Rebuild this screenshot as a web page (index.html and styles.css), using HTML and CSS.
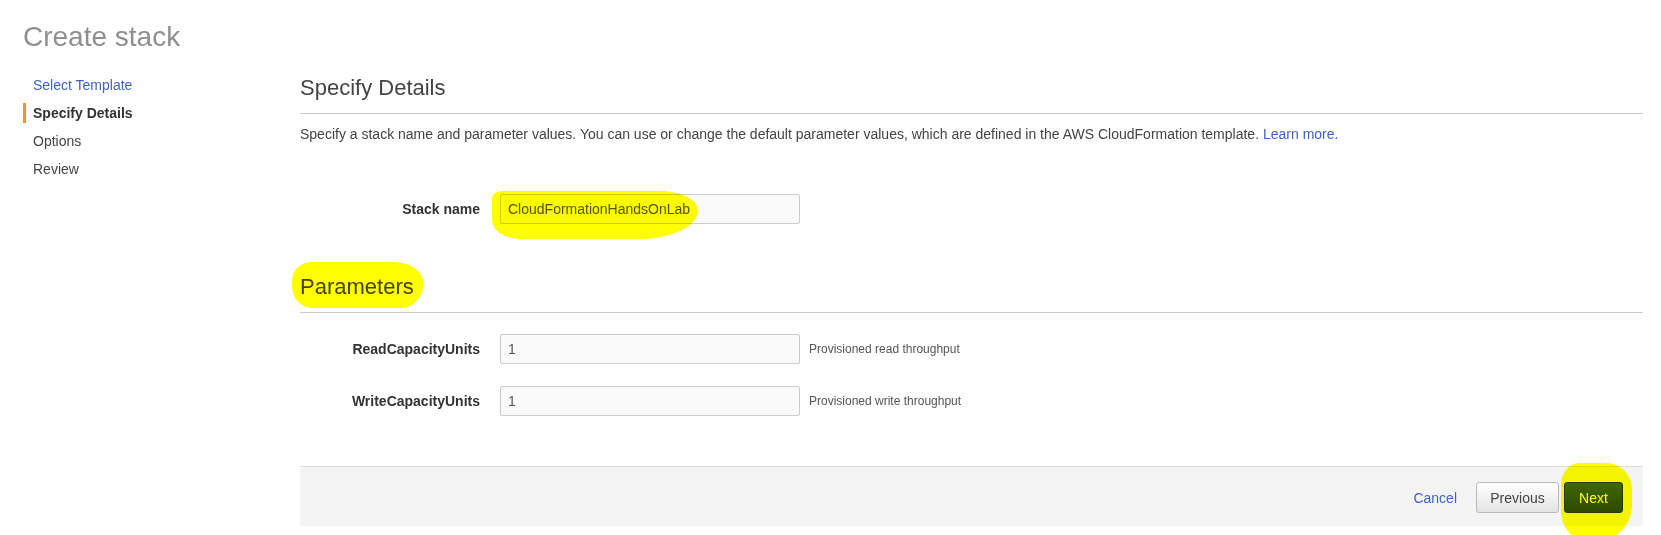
FILE: index.html
```html
<!DOCTYPE html>
<html lang="en">
<head>
<meta charset="utf-8">
<title>Create stack</title>
<link rel="stylesheet" href="styles.css">
</head>
<body>
<div class="page">
  <h1 class="title">Create stack</h1>
  <div class="layout">
    <nav class="steps">
      <a class="step step-link" href="#">Select Template</a>
      <span class="step step-active">Specify Details</span>
      <span class="step">Options</span>
      <span class="step">Review</span>
    </nav>
    <main class="content">
      <h2 class="section-title">Specify Details</h2>
      <p class="intro">Specify a stack name and parameter values. You can use or change the default parameter values, which are defined in the AWS CloudFormation template. <a class="link" href="#">Learn more.</a></p>

      <div class="form-row stack-row">
        <label class="field-label">Stack name</label>
        <div class="field">
          <input class="text-input" type="text" value="CloudFormationHandsOnLab">
          <span class="marker marker-stack"></span>
        </div>
      </div>

      <h2 class="section-title params-title"><span class="marker-host">Parameters<span class="marker marker-params"></span></span></h2>

      <div class="form-row read-row">
        <label class="field-label">ReadCapacityUnits</label>
        <div class="field">
          <input class="text-input" type="text" value="1">
        </div>
        <span class="hint">Provisioned read throughput</span>
      </div>

      <div class="form-row write-row">
        <label class="field-label">WriteCapacityUnits</label>
        <div class="field">
          <input class="text-input" type="text" value="1">
        </div>
        <span class="hint">Provisioned write throughput</span>
      </div>

      <div class="footer">
        <a class="link cancel" href="#">Cancel</a>
        <button class="btn btn-secondary" type="button">Previous</button>
        <button class="btn btn-primary" type="button">Next<span class="marker marker-next"></span></button>
      </div>
    </main>
  </div>
</div>
</body>
</html>
```

FILE: styles.css
```css
* { box-sizing: border-box; }

html { background: #ffffff; }

body {
  margin: 0;
  background: #ffffff;
  font-family: "Liberation Sans", Arial, sans-serif;
  color: #444444;
}

.page {
  padding: 20px 18px 30px 23px;
  background: #ffffff;
}

.title {
  margin: 0;
  font-size: 28px;
  line-height: 34px;
  font-weight: normal;
  color: #8f8f8f;
}

.layout {
  display: flex;
}

.steps {
  flex: none;
  width: 277px;
  padding-top: 21px;
  display: flex;
  flex-direction: column;
  align-items: flex-start;
  gap: 8px;
}

.step {
  display: block;
  font-size: 14px;
  line-height: 20px;
  padding-left: 10px;
  color: #444444;
  text-decoration: none;
}

.step-link { color: #3f62c4; }

.step-active {
  font-weight: bold;
  color: #333333;
  border-left: 3px solid #f7941d;
  padding-left: 7px;
}

.content {
  flex: 1;
  min-width: 0;
}

.section-title {
  margin: 21px 0 0;
  font-size: 22px;
  line-height: 26px;
  font-weight: normal;
  color: #444444;
  padding-bottom: 12px;
  border-bottom: 1px solid #cccccc;
}

.params-title { margin-top: 50px; }

.marker-host { position: relative; }

.intro {
  margin: 11px 0 0;
  font-size: 14px;
  line-height: 18px;
  color: #444444;
}

.link {
  color: #3f62c4;
  text-decoration: none;
}

.form-row {
  display: flex;
  align-items: center;
}

.stack-row { margin-top: 51px; }
.read-row { margin-top: 21px; }
.write-row { margin-top: 22px; }

.field-label {
  width: 180px;
  margin-right: 20px;
  text-align: right;
  font-size: 14px;
  font-weight: bold;
  color: #333333;
}

.field { position: relative; }

.text-input {
  display: block;
  width: 300px;
  height: 30px;
  padding: 0 7px;
  border: 1px solid #cccccc;
  border-radius: 2px;
  background: #fafafa;
  font-family: "Liberation Sans", Arial, sans-serif;
  font-size: 14px;
  color: #555555;
  outline: none;
}

.hint {
  margin-left: 9px;
  font-size: 12px;
  color: #555555;
}

.footer {
  margin-top: 50px;
  border-top: 1px solid #dddddd;
  background: #f4f4f4;
  padding: 15px 20px 13px;
  display: flex;
  justify-content: flex-end;
  align-items: center;
}

.cancel {
  font-size: 14px;
  margin-right: 19px;
}

.btn {
  height: 31px;
  font-family: "Liberation Sans", Arial, sans-serif;
  font-size: 14px;
  border-radius: 3px;
  cursor: pointer;
}

.btn-secondary {
  width: 83px;
  color: #444444;
  background: linear-gradient(#ffffff, #e4e4e4);
  border: 1px solid #b9b9b9;
}

.btn-primary {
  position: relative;
  width: 59px;
  margin-left: 5px;
  color: #ffffff;
  background: linear-gradient(#4066b4, #2d4a96);
  border: 1px solid #223d7a;
  overflow: visible;
}

.marker {
  position: absolute;
  background: #ffff00;
  mix-blend-mode: multiply;
  pointer-events: none;
}

.marker-stack {
  left: -8px;
  top: -3px;
  width: 206px;
  height: 48px;
  border-radius: 10px 40px 60px 30px / 8px 20px 30px 20px;
}

.marker-params {
  left: -8px;
  top: -12px;
  width: 131px;
  height: 46px;
  border-radius: 20px 30px 22px 20px / 18px 20px 24px 22px;
}

.marker-next {
  left: -4px;
  top: -20px;
  width: 71px;
  height: 76px;
  border-radius: 18px 26px 30px 22px / 22px 26px 34px 28px;
}
```
